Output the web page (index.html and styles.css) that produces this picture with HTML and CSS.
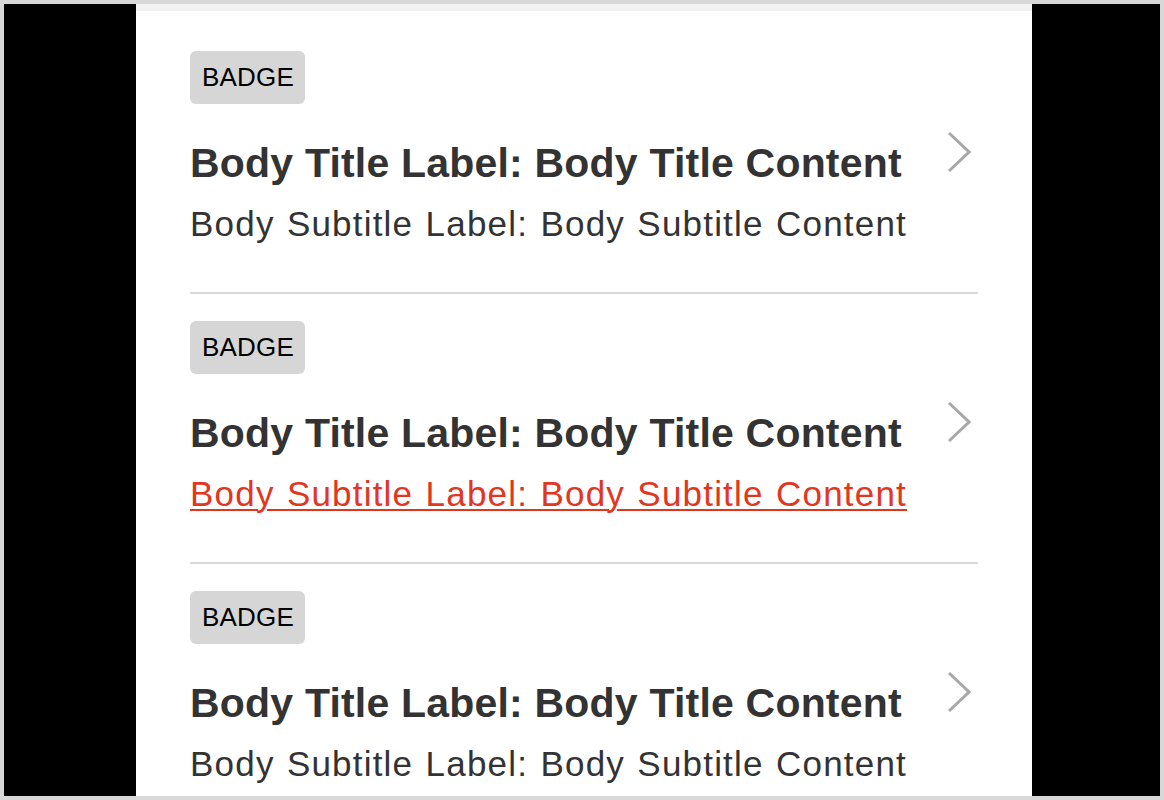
FILE: index.html
```html
<!DOCTYPE html>
<html lang="en">
<head>
<meta charset="utf-8">
<title>List</title>
<link rel="stylesheet" href="styles.css">
</head>
<body>
<div class="frame">
  <main class="column">
    <ul class="list">
      <li class="item">
        <span class="badge">BADGE</span>
        <div class="item-body">
          <div class="texts">
            <div class="title">Body Title Label: Body Title Content</div>
            <div class="subtitle">Body Subtitle Label: Body Subtitle Content</div>
          </div>
          <svg class="chevron" width="24" height="42" viewBox="0 0 24 42"><polyline points="2,2 22,21 2,40" fill="none" stroke="#a8a8a8" stroke-width="3"/></svg>
        </div>
      </li>
      <li class="item">
        <span class="badge">BADGE</span>
        <div class="item-body">
          <div class="texts">
            <div class="title">Body Title Label: Body Title Content</div>
            <div class="subtitle"><a class="link" href="#">Body Subtitle Label: Body Subtitle Content</a></div>
          </div>
          <svg class="chevron" width="24" height="42" viewBox="0 0 24 42"><polyline points="2,2 22,21 2,40" fill="none" stroke="#a8a8a8" stroke-width="3"/></svg>
        </div>
      </li>
      <li class="item">
        <span class="badge">BADGE</span>
        <div class="item-body">
          <div class="texts">
            <div class="title">Body Title Label: Body Title Content</div>
            <div class="subtitle">Body Subtitle Label: Body Subtitle Content</div>
          </div>
          <svg class="chevron" width="24" height="42" viewBox="0 0 24 42"><polyline points="2,2 22,21 2,40" fill="none" stroke="#a8a8a8" stroke-width="3"/></svg>
        </div>
      </li>
    </ul>
  </main>
</div>
</body>
</html>
```

FILE: styles.css
```css
html, body {
  margin: 0;
  padding: 0;
}
body {
  background: #d8d8d8;
  padding: 4px;
  font-family: "Liberation Sans", Arial, sans-serif;
  box-sizing: border-box;
  height: 800px;
  overflow: hidden;
}
.frame {
  height: 792px;
  background: #000;
  display: flex;
  justify-content: center;
  padding-left: 4px;
  box-sizing: border-box;
  overflow: hidden;
}
.column {
  width: 896px;
  flex: none;
  background: #fff;
  border-top: 7px solid #f1f1f1;
  box-sizing: border-box;
  padding: 0 54px;
}
.list {
  list-style: none;
  margin: 0;
  padding: 13px 0 0;
}
.item {
  display: flex;
  flex-direction: column;
  align-items: flex-start;
  padding: 27px 0 46px;
  border-bottom: 2px solid #d9d9d9;
}
.badge {
  display: flex;
  align-items: center;
  justify-content: center;
  height: 53px;
  padding: 0 11px 0 12px;
  background: #d6d6d6;
  border-radius: 6px;
  font-size: 26px;
  color: #000;
  letter-spacing: 0.2px;
  box-sizing: border-box;
}
.item-body {
  display: flex;
  align-items: flex-start;
  justify-content: space-between;
  align-self: stretch;
  margin-top: 35px;
}
.texts {
  display: flex;
  flex-direction: column;
  gap: 15px;
}
.title {
  font-size: 41px;
  line-height: 48px;
  font-weight: bold;
  color: #333;
  letter-spacing: 0.2px;
  white-space: nowrap;
}
.subtitle {
  font-size: 35px;
  line-height: 44px;
  color: #333;
  letter-spacing: 1.2px;
  word-spacing: 1.4px;
  white-space: nowrap;
}
.link {
  color: #e2361f;
  text-decoration: underline;
  text-decoration-thickness: 2px;
  text-underline-offset: 3px;
}
.chevron {
  display: block;
  margin-top: -8px;
  margin-right: 7px;
}
```
